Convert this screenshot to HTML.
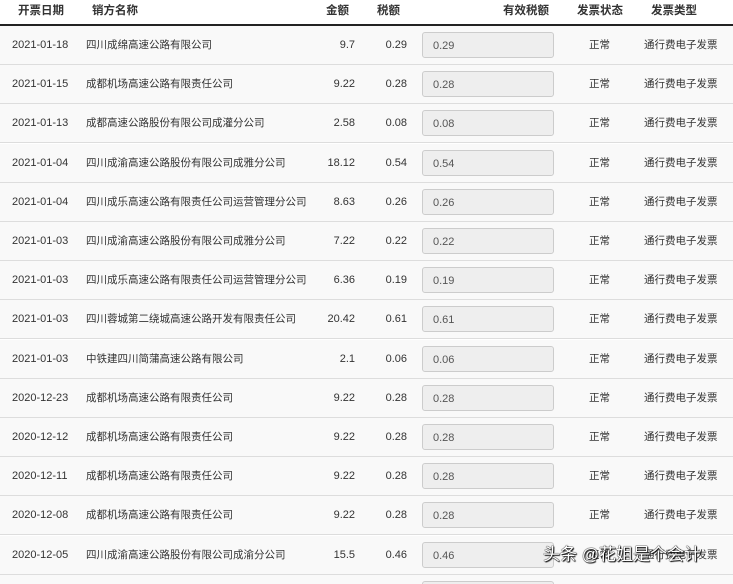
<!DOCTYPE html>
<html><head><meta charset="utf-8"><style>
html,body{margin:0;width:733px;height:584px;overflow:hidden}
body{background:#fff;font-family:"Liberation Sans","Noto Sans CJK SC",sans-serif;font-size:11px;color:#333;position:relative}
#wrap{position:absolute;left:0;top:0;width:733px;height:584px;overflow:hidden}
.h{position:absolute;top:0;left:0;width:733px;height:24px;border-bottom:2px solid #222;font-weight:bold;font-size:11.5px}
.h span{position:absolute;top:0;line-height:22px;white-space:nowrap}
.r{position:absolute;left:0;width:733px;height:38px;background:#f9f9f9;border-bottom:1px solid #ddd}
.r span{position:absolute;top:0;line-height:38px;white-space:nowrap}
.r span.c{font-size:10.5px}
.in{position:absolute;left:422px;top:6px;width:132px;height:26px;background:#eee;border:1px solid #ccc;border-radius:3px;box-sizing:border-box}
.in i{font-style:normal;position:absolute;left:10px;top:2px;line-height:22px;color:#555}
.wm{position:absolute;left:543px;top:543px;font-size:17px;line-height:24px;color:#fff;text-shadow:0 0 1px #000,0 0 1px #000,1px 1px 1px #000;white-space:nowrap}
</style></head><body><div id="wrap">
<div class="h"><span style="left:18px">开票日期</span><span style="left:92px">销方名称</span><span style="left:326px">金额</span><span style="left:377px">税额</span><span style="left:503px">有效税额</span><span style="left:577px">发票状态</span><span style="left:651px">发票类型</span></div>
<div id="rows"></div>
<div class="wm">头条 @花姐是个会计</div>
</div>
<script>
var d=[["2021-01-18","四川成绵高速公路有限公司","9.7","0.29"],["2021-01-15","成都机场高速公路有限责任公司","9.22","0.28"],["2021-01-13","成都高速公路股份有限公司成灌分公司","2.58","0.08"],["2021-01-04","四川成渝高速公路股份有限公司成雅分公司","18.12","0.54"],["2021-01-04","四川成乐高速公路有限责任公司运营管理分公司","8.63","0.26"],["2021-01-03","四川成渝高速公路股份有限公司成雅分公司","7.22","0.22"],["2021-01-03","四川成乐高速公路有限责任公司运营管理分公司","6.36","0.19"],["2021-01-03","四川蓉城第二绕城高速公路开发有限责任公司","20.42","0.61"],["2021-01-03","中铁建四川简蒲高速公路有限公司","2.1","0.06"],["2020-12-23","成都机场高速公路有限责任公司","9.22","0.28"],["2020-12-12","成都机场高速公路有限责任公司","9.22","0.28"],["2020-12-11","成都机场高速公路有限责任公司","9.22","0.28"],["2020-12-08","成都机场高速公路有限责任公司","9.22","0.28"],["2020-12-05","四川成渝高速公路股份有限公司成渝分公司","15.5","0.46"],["","","",""]];
var h="";d.forEach(function(r,i){var t=26+i*39.2;h+='<div class="r" style="top:'+t+'px">'+(r[0]?'<span style="left:12px">'+r[0]+'</span><span class="c" style="left:86px">'+r[1]+'</span><span style="right:378px">'+r[2]+'</span><span style="right:326px">'+r[3]+'</span><div class="in"><i>'+r[3]+'</i></div><span class="c" style="left:589px">正常</span><span class="c" style="left:644px">通行费电子发票</span>':'<div class="in"></div>')+'</div>'});
document.getElementById("rows").innerHTML=h;
</script>
</body></html>
